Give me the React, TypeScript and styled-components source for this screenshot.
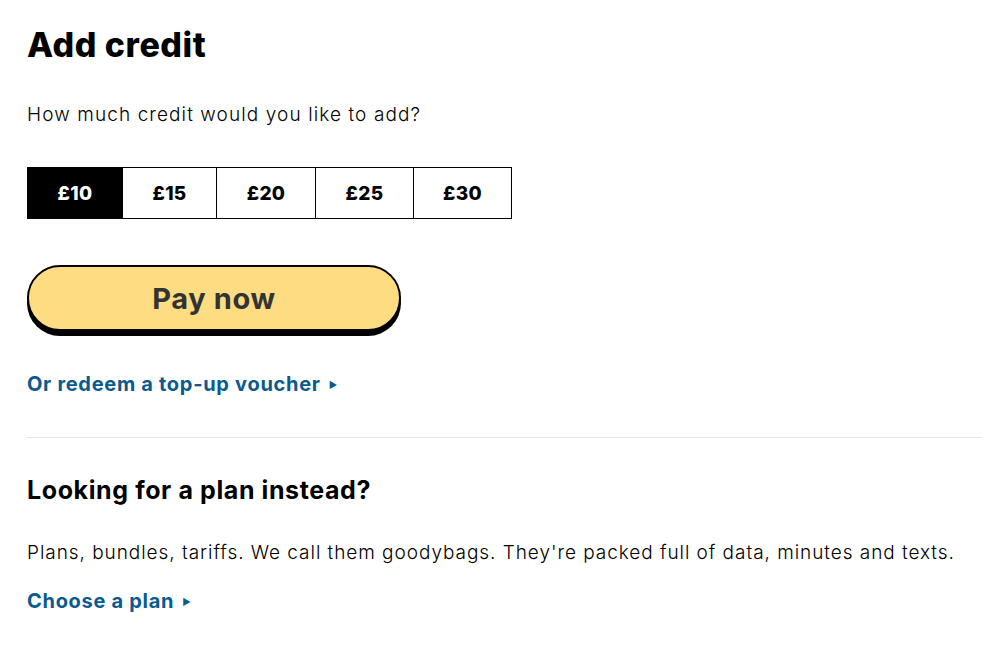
import React, { useState } from "react";
import styled, { createGlobalStyle } from "styled-components";

const Global = createGlobalStyle`
  html, body { margin: 0; padding: 0; background: #fff; }
  body { font-family: Inter, "Open Sans", sans-serif; color: #000; }
  * { box-sizing: border-box; }
`;

const Page = styled.main`
  padding: 23px 0 0 27px;
  display: flex;
  flex-direction: column;
  align-items: flex-start;
`;

const Title = styled.h1`
  margin: 0;
  font-size: 34px;
  line-height: 44px;
  font-weight: 800;
  letter-spacing: 0.5px;
`;

const Lead = styled.p`
  margin: 36px 0 0;
  font-size: 19px;
  line-height: 24px;
  font-weight: 300;
  letter-spacing: 1.1px;
`;

const Amounts = styled.div`
  margin-top: 40px;
  display: flex;
  border: 1px solid #000;
`;

const Amount = styled.button<{ $w: number; $active?: boolean }>`
  width: ${(p) => p.$w}px;
  height: 50px;
  border: none;
  border-left: 1px solid #000;
  &:first-child { border-left: none; }
  background: ${(p) => (p.$active ? "#000" : "#fff")};
  color: ${(p) => (p.$active ? "#fff" : "#000")};
  font-family: inherit;
  font-size: 19px;
  font-weight: 800;
  letter-spacing: 0.3px;
  padding: 0;
  cursor: pointer;
`;

const PayButton = styled.button`
  margin-top: 46px;
  width: 374px;
  height: 66px;
  border: 2px solid #000;
  border-radius: 40px;
  box-shadow: 0 5px 0 #000;
  background: #fddc82;
  color: #333;
  font-family: inherit;
  font-size: 29px;
  font-weight: 700;
  letter-spacing: 0.6px;
  cursor: pointer;
`;

const LinkText = styled.a`
  display: inline-flex;
  align-items: center;
  color: #0b5a8e;
  font-size: 20px;
  line-height: 24px;
  font-weight: 700;
  text-decoration: none;
  letter-spacing: 0.7px;
`;

const Arrow = styled.span`
  font-size: 9px;
  margin-left: 8px;
  line-height: 1;
`;

const VoucherLink = styled(LinkText)`
  margin-top: 41px;
`;

const Divider = styled.hr`
  align-self: stretch;
  margin: 41px 0 0;
  border: none;
  border-top: 1px solid #e6e6e6;
`;

const SubTitle = styled.h2`
  margin: 36px 0 0;
  font-size: 25px;
  line-height: 32px;
  font-weight: 700;
  letter-spacing: 0.6px;
`;

const Body = styled.p`
  margin: 35px 0 0;
  font-size: 19px;
  line-height: 24px;
  font-weight: 300;
  letter-spacing: 0.95px;
`;

const PlanLink = styled(LinkText)`
  margin-top: 24px;
`;

const amounts = [
  { v: 10, w: 94 },
  { v: 15, w: 94 },
  { v: 20, w: 99 },
  { v: 25, w: 98 },
  { v: 30, w: 98 },
];

export default function App() {
  const [sel, setSel] = useState(10);
  return (
    <>
      <Global />
      <Page>
        <Title>Add credit</Title>
        <Lead>How much credit would you like to add?</Lead>
        <Amounts>
          {amounts.map((a) => (
            <Amount key={a.v} $w={a.w} $active={sel === a.v} onClick={() => setSel(a.v)}>
              £{a.v}
            </Amount>
          ))}
        </Amounts>
        <PayButton>Pay now</PayButton>
        <VoucherLink href="#">
          Or redeem a top-up voucher<Arrow>▶</Arrow>
        </VoucherLink>
        <Divider />
        <SubTitle>Looking for a plan instead?</SubTitle>
        <Body>
          Plans, bundles, tariffs. We call them goodybags. They're packed full of data, minutes and texts.
        </Body>
        <PlanLink href="#">
          Choose a plan<Arrow>▶</Arrow>
        </PlanLink>
      </Page>
    </>
  );
}
